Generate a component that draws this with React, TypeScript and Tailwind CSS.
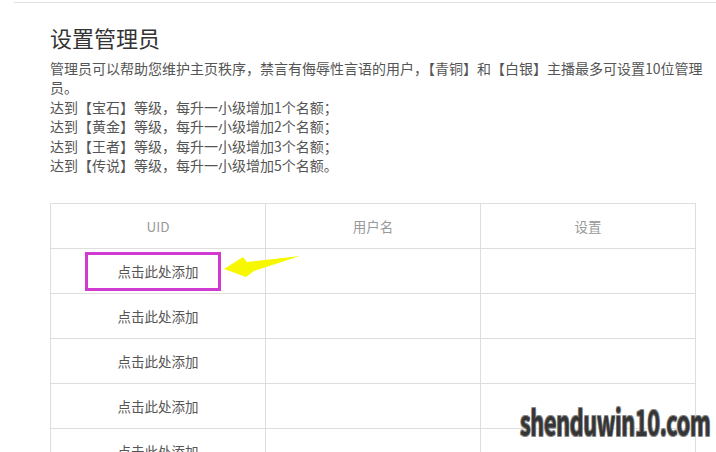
const rules = [
  '达到【宝石】等级，每升一小级增加1个名额；',
  '达到【黄金】等级，每升一小级增加2个名额；',
  '达到【王者】等级，每升一小级增加3个名额；',
  '达到【传说】等级，每升一小级增加5个名额。',
];

const rows = [1, 2, 3, 4, 5, 6];

const App = () => {
  return (
    <div
      className="relative w-[716px] h-[452px] overflow-hidden bg-white"
      style={{ fontFamily: '"Noto Sans CJK SC", "Noto Sans", sans-serif' }}
    >
      <div className="mt-[2px] ml-[14px] h-px bg-[#e2e2e2]" />

      <div className="pl-[50px] pt-[19px]">
        <h1 className="text-[22px] leading-[30px] text-[#333]">设置管理员</h1>
        <div className="mt-[7px] text-[14px] leading-[19.4px] text-[#555] whitespace-nowrap">
          <div>管理员可以帮助您维护主页秩序，禁言有侮辱性言语的用户，【青铜】和【白银】主播最多可设置10位管理</div>
          <div>员。</div>
          {rules.map(r => (
            <div key={r}>{r}</div>
          ))}
        </div>

        <table className="mt-[28px] w-[646px] border-collapse table-fixed text-[13.5px]">
          <thead>
            <tr className="h-[45px]">
              <th className="border border-[#dedede] font-normal text-[#999]">UID</th>
              <th className="border border-[#dedede] font-normal text-[#999]">用户名</th>
              <th className="border border-[#dedede] font-normal text-[#999]">设置</th>
            </tr>
          </thead>
          <tbody>
            {rows.map(i => (
              <tr key={i} className="h-[45px]">
                <td className="border border-[#dedede] text-center text-[#555]">点击此处添加</td>
                <td className="border border-[#dedede]" />
                <td className="border border-[#dedede]" />
              </tr>
            ))}
          </tbody>
        </table>
      </div>

      {/* annotation box + arrow */}
      <div className="absolute left-[85px] top-[252px] w-[136px] h-[39px] border-[3px] border-[#d03ad0]" />
      <svg className="absolute left-0 top-0" width="716" height="452" viewBox="0 0 716 452">
        <polygon
          points="224,269 243,257 247,262 300,256 254,271 246,277"
          fill="#f7f700"
        />
      </svg>

      {/* watermark */}
      <div className="absolute right-[6px] bottom-[11px]">
        <span
          className="inline-block origin-right scale-x-[0.6] text-[36px] leading-none font-semibold text-[#353535] tracking-[-0.5px]"
          style={{
            textShadow:
              '1px 1px 0 #8a8a8a, -1px -1px 0 #8a8a8a, 1px -1px 0 #8a8a8a, -1px 1px 0 #8a8a8a, 0 0 3px #fff, 0 0 3px #fff',
          }}
        >
          shenduwin10.com
        </span>
      </div>
    </div>
  );
};

export default App;
